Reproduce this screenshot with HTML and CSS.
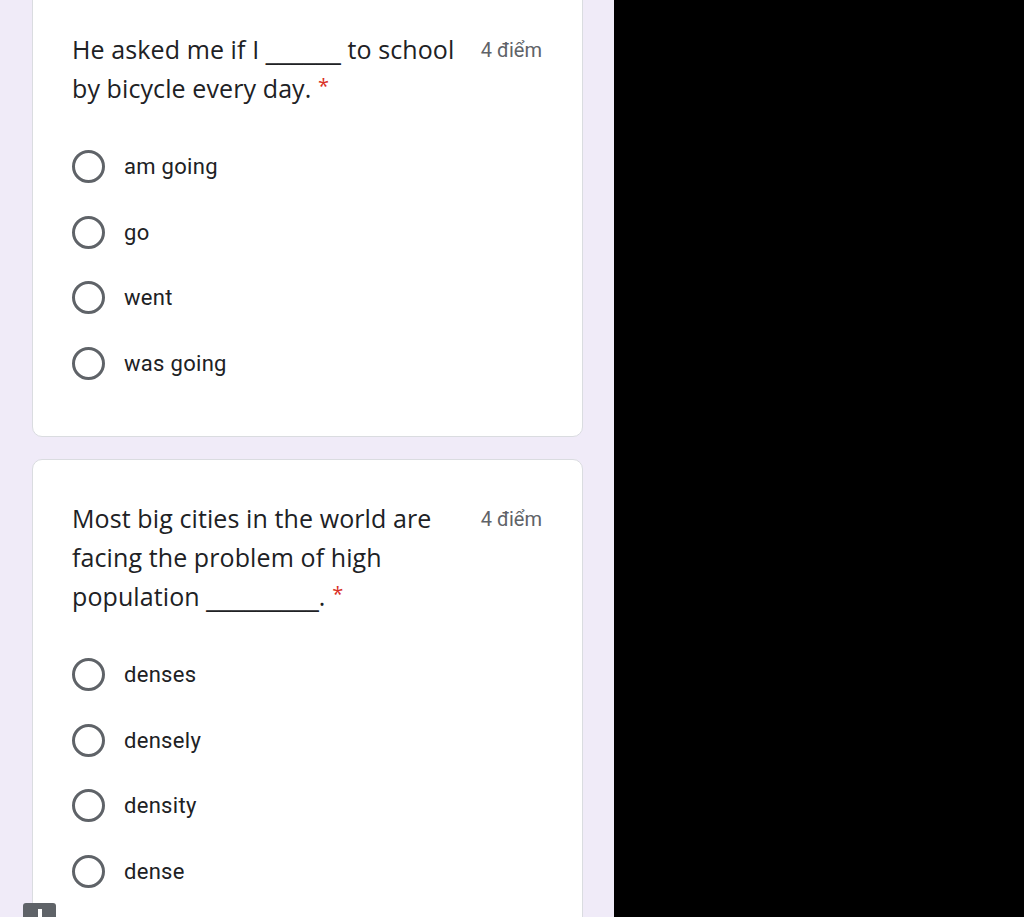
FILE: index.html
```html
<!DOCTYPE html>
<html lang="vi">
<head>
<meta charset="utf-8">
<title>Form</title>
<link rel="stylesheet" href="styles.css">
</head>
<body>
<div class="screen">
  <main class="page">
    <div class="stack">
      <section class="card">
        <div class="q-head">
          <div class="q-title">He asked me if I <span class="blank">______</span> to school by bicycle every day. <span class="req">*</span></div>
          <div class="q-points">4 điểm</div>
        </div>
        <ul class="options">
          <li class="opt"><span class="radio"></span><span class="opt-label">am going</span></li>
          <li class="opt"><span class="radio"></span><span class="opt-label">go</span></li>
          <li class="opt"><span class="radio"></span><span class="opt-label">went</span></li>
          <li class="opt"><span class="radio"></span><span class="opt-label">was going</span></li>
        </ul>
      </section>
      <section class="card">
        <div class="q-head">
          <div class="q-title">Most big cities in the world are facing the problem of high population <span class="blank">_________</span>. <span class="req">*</span></div>
          <div class="q-points">4 điểm</div>
        </div>
        <ul class="options">
          <li class="opt"><span class="radio"></span><span class="opt-label">denses</span></li>
          <li class="opt"><span class="radio"></span><span class="opt-label">densely</span></li>
          <li class="opt"><span class="radio"></span><span class="opt-label">density</span></li>
          <li class="opt"><span class="radio"></span><span class="opt-label">dense</span></li>
        </ul>
      </section>
    </div>
    <div class="fab-tab"><span class="fab-mark"></span></div>
  </main>
  <div class="blackout"></div>
</div>
</body>
</html>
```

FILE: styles.css
```css
html, body {
  margin: 0;
  padding: 0;
  height: 100%;
  overflow: hidden;
  background: #000;
}
.screen {
  display: flex;
  height: 917px;
  width: 1024px;
}
.page {
  position: relative;
  width: 614px;
  flex: none;
  background: #f0ebf8;
  overflow: hidden;
}
.blackout {
  flex: 1;
  background: #000;
}
.stack {
  display: flex;
  flex-direction: column;
  gap: 22px;
  margin: -10px 31px 0 32px;
}
.card {
  background: #fff;
  border: 1px solid #dadce0;
  border-radius: 10px;
  padding: 39px 40px 40px 39px;
}
.q-head {
  display: flex;
  align-items: flex-start;
}
.q-title {
  flex: 1;
  max-width: 396px;
  font-family: "Open Sans", sans-serif;
  font-size: 25px;
  letter-spacing: 0.1px;
  line-height: 39px;
  color: #202124;
}
.blank {
  font-family: "DejaVu Sans", sans-serif;
  letter-spacing: 0;
  line-height: 0;
}
.req {
  color: #d93025;
  font-size: 20px;
  line-height: 0;
  vertical-align: 5px;
}
.q-points {
  margin-left: auto;
  font-family: "Roboto", sans-serif;
  font-size: 20px;
  line-height: 39px;
  color: #5f6368;
  padding-top: 1px;
}
.options {
  list-style: none;
  margin: 26px 0 0 0;
  padding: 0;
}
.opt {
  display: flex;
  align-items: center;
  height: 65.5px;
}
.radio {
  width: 27px;
  height: 27px;
  border: 3px solid #5f6368;
  border-radius: 50%;
  flex: none;
}
.opt-label {
  margin-left: 19px;
  font-family: "Roboto", sans-serif;
  font-size: 22px;
  letter-spacing: 0.3px;
  color: #202124;
}
.fab-tab {
  position: absolute;
  left: 23px;
  top: 903px;
  width: 33px;
  height: 20px;
  background: #5f6368;
  border-radius: 3px 3px 0 0;
  display: flex;
  justify-content: center;
}
.fab-mark {
  width: 4px;
  height: 12px;
  margin-top: 6px;
  background: #fff;
}
```
